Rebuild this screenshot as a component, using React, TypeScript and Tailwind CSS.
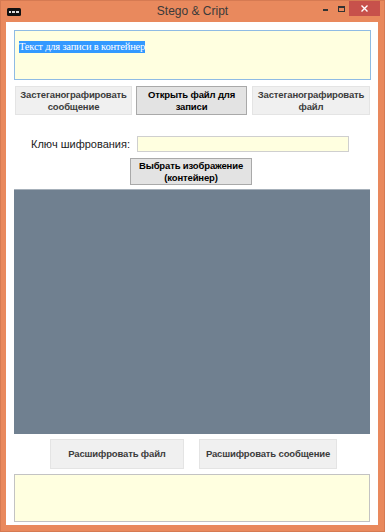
import React from 'react';

const btnFont = { fontFamily: '"Liberation Sans", Arial, sans-serif' };

const FlatButton: React.FC<{ label: React.ReactNode; className: string; strong?: boolean }> = ({
  label,
  className,
  strong,
}) => (
  <button
    className={
      'flex items-center justify-center text-center text-[9.5px] tracking-[-0.15px] font-bold leading-[12px] ' +
      (strong
        ? 'bg-[#e3e3e3] border border-[#a9a9a9] text-black '
        : 'bg-[#f0f0f0] border border-[#e4e4e4] text-[#3c3c3c] ') +
      className
    }
    style={btnFont}
  >
    {label}
  </button>
);

export default function App() {
  return (
    <div className="w-[385px] h-[532px] bg-[#e9895d] flex flex-col border border-[#d67a52]">
      {/* title bar */}
      <div className="h-[21px] flex items-start relative">
        <div className="absolute left-[6px] top-[7px]">
          <svg width="14" height="8" viewBox="0 0 14 8">
            <rect x="0" y="0" width="14" height="8" rx="1.5" fill="#111" />
            <rect x="2" y="3" width="2" height="2" fill="#ddd" />
            <rect x="5" y="3" width="3" height="2" fill="#ddd" />
            <rect x="9" y="3" width="3" height="2" fill="#ddd" />
          </svg>
        </div>
        <div
          className="flex-1 text-center text-[12px] leading-[21px] text-[#3a3a3a]"
          style={{ fontFamily: '"Liberation Sans", Arial, sans-serif' }}
        >
          Stego &amp; Cript
        </div>
        <div className="absolute right-[4px] top-0 flex items-start">
          <div className="w-[16px] h-[15px] flex items-center justify-center">
            <div className="w-[5px] h-[2px] bg-[#333] mt-[3px]" />
          </div>
          <div className="w-[16px] h-[15px] flex items-center justify-center">
            <div className="w-[7px] h-[6px] border border-[#333] border-t-2" />
          </div>
          <div className="w-[31px] h-[15px] bg-[#c7514b] flex items-center justify-center">
            <svg width="7" height="7" viewBox="0 0 7 7">
              <path d="M0.5 0.5 L6.5 6.5 M6.5 0.5 L0.5 6.5" stroke="#fff" strokeWidth="1.4" />
            </svg>
          </div>
        </div>
      </div>

      {/* client area */}
      <div className="ml-[5px] mr-[6px] h-[503px] bg-white flex flex-col pl-[8px] pr-[7px]">
        <div className="mt-[8px] h-[50px] w-[357px] bg-[#ffffe0] border border-[#8fbbe4] px-[4px] pt-[1px]">
          <span
            className="inline-block bg-[#3399ff] text-white text-[10.5px] leading-[12px] tracking-[-0.2px]"
            style={{ fontFamily: '"Liberation Serif", "Times New Roman", serif' }}
          >
            Текст для записи в контейнер
          </span>
        </div>

        <div className="mt-[6px] flex h-[29px] pl-[1px]">
          <FlatButton label={<>Застеганографировать<br />сообщение</>} className="w-[117px] h-full" />
          <FlatButton label={<>Открыть файл для<br />записи</>} className="w-[111px] h-full ml-[4px]" strong />
          <FlatButton label={<>Застеганографировать<br />файл</>} className="w-[118px] h-full ml-[5px]" />
        </div>

        <div className="mt-[21px] flex items-center h-[16px]">
          <div
            className="w-[123px] text-right text-[11px] text-[#222] pr-[7px]"
            style={{ fontFamily: '"Liberation Sans", Arial, sans-serif' }}
          >
            Ключ шифрования:
          </div>
          <div className="w-[212px] h-[16px] bg-[#ffffe0] border border-[#cfcfcf]" />
        </div>

        <div className="mt-[6px] flex pl-[116px] h-[27px]">
          <FlatButton label={<>Выбрать изображение<br />(контейнер)</>} className="w-[122px] h-full" strong />
        </div>

        <div className="mt-[4px] h-[245px] w-[356px] bg-[#708090] border-t border-[#a6b0ba]" />

        <div className="mt-[5px] flex h-[30px] pl-[36px]">
          <FlatButton label="Расшифровать файл" className="w-[134px] h-full" />
          <FlatButton label="Расшифровать сообщение" className="w-[138px] h-full ml-[15px]" />
        </div>

        <div className="mt-[5px] h-[48px] w-[356px] bg-[#ffffe0] border border-[#c3c3c3]" />
      </div>
    </div>
  );
}
